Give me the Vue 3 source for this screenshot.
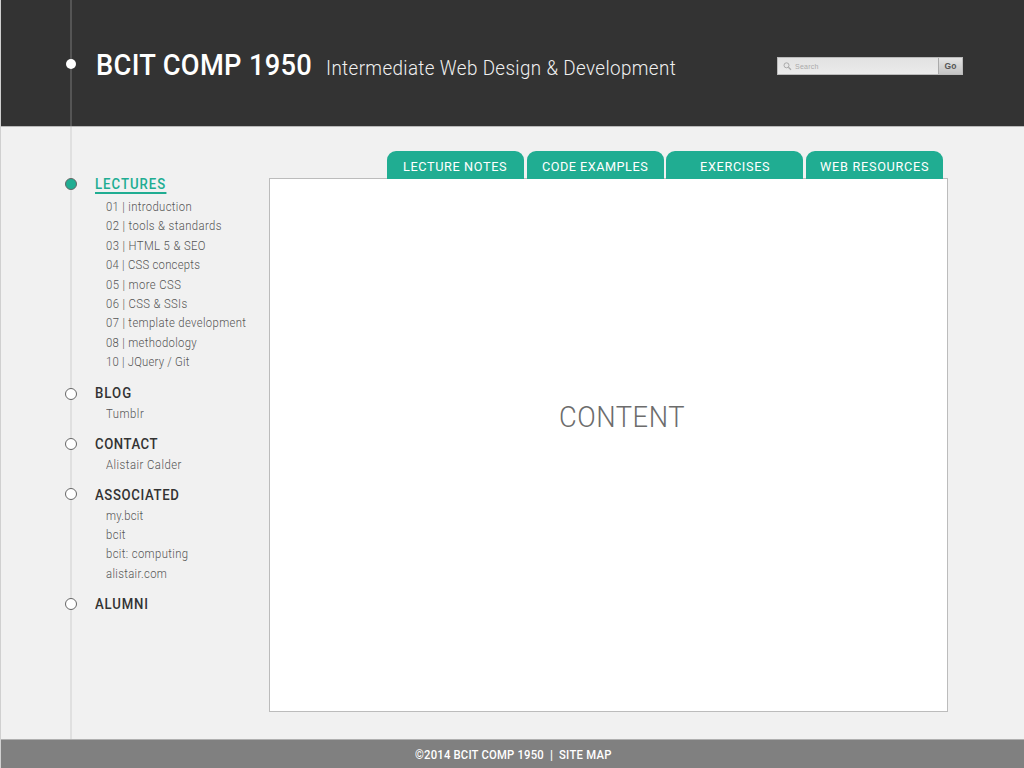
<script setup>
// Condenses the glyphs slightly, then tracks the run out to the given width.
const CONDENSE = 0.94
const vFit = {
  mounted(el, { value }) {
    el.style.letterSpacing = '0px'
    const natural = el.offsetWidth
    const target = value / CONDENSE
    el.style.letterSpacing = (target - natural) / el.textContent.length + 'px'
    el.style.transform = `scaleX(${CONDENSE})`
    el.style.marginRight = value - target + 'px'
  }
}

const tabs = [
  { label: 'LECTURE NOTES', width: 104 },
  { label: 'CODE EXAMPLES', width: 106 },
  { label: 'EXERCISES', width: 70 },
  { label: 'WEB RESOURCES', width: 109 }
]

const sections = [
  {
    title: 'LECTURES', width: 71, active: true,
    items: [
      ['01 | introduction', 86],
      ['02 | tools & standards', 116],
      ['03 | HTML 5 & SEO', 100],
      ['04 | CSS concepts', 94],
      ['05 | more CSS', 75],
      ['06 | CSS & SSIs', 82],
      ['07 | template development', 140],
      ['08 | methodology', 91],
      ['10 | JQuery / Git', 84]
    ]
  },
  { title: 'BLOG', width: 37, node: 'low', items: [['Tumblr', 38]] },
  { title: 'CONTACT', width: 63, items: [['Alistair Calder', 76]] },
  {
    title: 'ASSOCIATED', width: 84.5, node: 'high',
    items: [['my.bcit', 37.5], ['bcit', 19.5], ['bcit: computing', 82], ['alistair.com', 61.5]]
  },
  { title: 'ALUMNI', width: 54, items: [] }
]
</script>

<template>
  <div class="page">
    <div class="timeline"></div>
    <header class="header">
      <i class="origin"></i>
      <h1><span v-fit="216">BCIT COMP 1950</span></h1>
      <p class="subtitle"><span v-fit="350.5">Intermediate Web Design &amp; Development</span></p>
      <div class="search">
        <div class="field">
          <svg width="9" height="9" viewBox="0 0 9 9">
            <circle cx="3.5" cy="3.3" r="2.5" fill="none" stroke="#aaa" />
            <path d="M5.4 5.2L8 7.8" stroke="#aaa" stroke-width="1.3" />
          </svg>
          <span v-fit="24">Search</span>
        </div>
        <div class="go">Go</div>
      </div>
    </header>

    <div class="body">
      <nav class="sidebar">
        <section v-for="s in sections" :key="s.title" :class="{ active: s.active }">
          <h2><i class="node" :class="s.node"></i><span v-fit="s.width">{{ s.title }}</span></h2>
          <ul>
            <li v-for="item in s.items" :key="item[0]"><span v-fit="item[1]">{{ item[0] }}</span></li>
          </ul>
        </section>
      </nav>
      <main class="main">
        <div class="tabs">
          <div v-for="t in tabs" :key="t.label" class="tab"><span v-fit="t.width">{{ t.label }}</span></div>
        </div>
        <div class="panel"><span v-fit="126">CONTENT</span></div>
      </main>
    </div>

    <footer class="footer">
      <span v-fit="129">©2014 BCIT COMP 1950</span><b>|</b><span v-fit="53">SITE MAP</span>
    </footer>
  </div>
</template>

<style>
body { margin: 0; }
</style>

<style scoped>
.page {
  position: relative;
  box-sizing: border-box;
  width: 1024px;
  height: 768px;
  overflow: hidden;
  border-left: 1px solid #d0d0d0;
  background: #f1f1f1;
  display: flex;
  flex-direction: column;
  font-family: Roboto, "Liberation Sans", sans-serif;
}
span { white-space: nowrap; display: inline-block; transform-origin: 0 50%; }
.timeline {
  position: absolute;
  left: 69px;
  top: 0;
  width: 2px;
  height: 739px;
  background: rgba(176, 176, 176, 0.27);
  z-index: 1;
}
.header {
  position: relative;
  box-sizing: border-box;
  height: 127px;
  flex: none;
  background: #333;
  border-bottom: 1px solid #b9b9b9;
  display: flex;
  padding-left: 95px;
}
.origin {
  position: absolute;
  left: 65px;
  top: 59px;
  width: 10px;
  height: 10px;
  border-radius: 50%;
  background: #fff;
  z-index: 2;
}
h1 {
  margin: 45px 0 0;
  width: 230px;
  font-size: 29px;
  line-height: 40px;
  font-weight: 500;
  color: #fff;
}
.subtitle {
  margin: 53px 0 0;
  width: 451px;
  font-size: 20px;
  line-height: 30px;
  font-weight: 300;
  color: #f0f0f0;
}
.search {
  display: flex;
  margin-top: 57px;
  width: 186px;
  height: 18px;
  box-sizing: border-box;
  border: 1px solid #bbb;
}
.field {
  flex: 1;
  display: flex;
  align-items: center;
  gap: 3px;
  padding-left: 5px;
  background: linear-gradient(#e2e2e2, #ebebeb);
  color: #aaa;
  font: 7.5px "Liberation Sans", sans-serif;
}
.go {
  width: 23px;
  border-left: 1px solid #aaa;
  background: linear-gradient(#e4e4e4, #c4c4c4);
  color: #555;
  font: bold 8.5px/16px "Liberation Sans", sans-serif;
  text-align: center;
}
.body { display: flex; height: 612px; }
.sidebar {
  width: 268px;
  padding-top: 46px;
  padding-left: 94px;
  box-sizing: border-box;
  flex: none;
}
section { margin-bottom: 9px; }
h2 {
  position: relative;
  margin: 0 0 0.6px;
  font-size: 14px;
  line-height: 22px;
  height: 22px;
  font-weight: 500;
  color: #333;
}
.node {
  position: absolute;
  left: -30px;
  top: 5px;
  width: 12px;
  height: 12px;
  box-sizing: border-box;
  border: 1px solid #666;
  border-radius: 50%;
  background: #fff;
  z-index: 2;
}
.node.low { top: 6px; }
.node.high { top: 4px; }
.active h2 { color: #20ad92; margin-bottom: 3.6px; }
.active h2 span { line-height: 15px; border-bottom: 2px solid #20ad92; }
.active .node { background: #20ad92; }
ul { margin: 0; padding: 0 0 0 11px; list-style: none; }
li {
  height: 19.4px;
  line-height: 19.4px;
  font-size: 12px;
  font-weight: 300;
  color: #555;
}
.active li { position: relative; top: -0.6px; }
.main { width: 679px; padding-top: 24px; }
.tabs {
  display: flex;
  gap: 2.7px;
  height: 27.5px;
  margin-left: 118px;
}
.tab {
  width: 137px;
  border-radius: 9px 9px 0 0;
  background: #20ad92;
  color: #fff;
  text-align: center;
  font-size: 13.5px;
  line-height: 31px;
  font-weight: 400;
}
.panel {
  box-sizing: border-box;
  height: 534px;
  margin-top: -0.5px;
  padding: 221px 0 0 289px;
  border: 1px solid #bcbcbc;
  background: #fff;
  color: #6c6c6c;
  font-size: 29px;
  line-height: 34px;
  font-weight: 300;
}
.footer {
  box-sizing: border-box;
  height: 29px;
  border-top: 1px solid #b0b0b0;
  background: #808080;
  color: #fff;
  display: flex;
  padding-left: 414px;
  font-size: 12px;
  line-height: 30px;
  font-weight: 500;
}
.footer b { width: 15px; text-align: center; font-weight: 500; }
</style>
